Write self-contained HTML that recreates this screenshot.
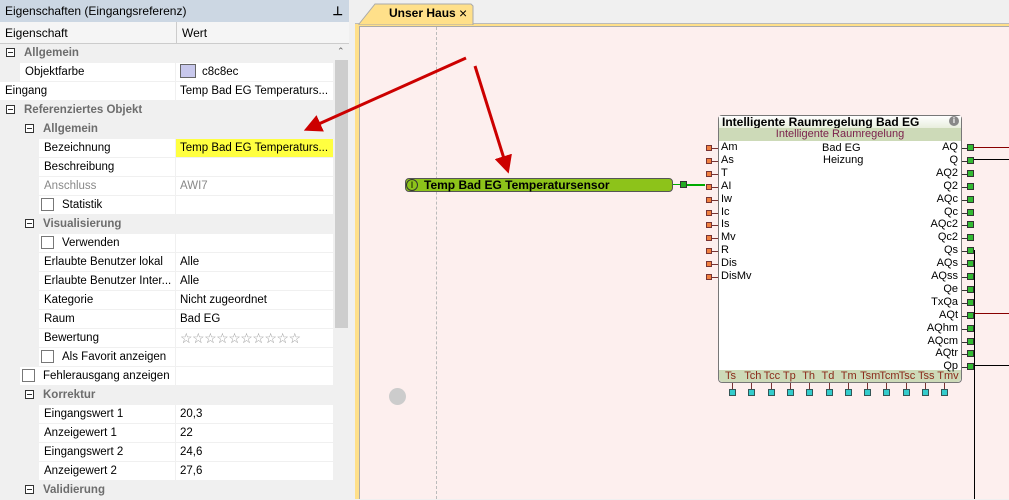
<!DOCTYPE html>
<html><head><meta charset="utf-8"><style>
*{margin:0;padding:0;box-sizing:border-box}
body{width:1009px;height:499px;overflow:hidden;background:#f0f0f0;font-family:"Liberation Sans",sans-serif;font-size:12px;color:#000;position:relative}
.abs{position:absolute}
.row{position:absolute;left:0;width:333px;height:19px;line-height:18px;white-space:nowrap;font-size:11.5px}
.row .n{position:absolute;top:0;height:18px;background:#fff;padding-left:5px;overflow:hidden}
.row .v{position:absolute;left:176px;width:157px;top:0;height:18px;background:#fff;padding-left:4px;overflow:hidden}
.grp{background:#f0f0f0;color:#6d6d6d;font-weight:bold}
.mn{position:absolute;top:4px;width:9px;height:9px;border:1px solid #333;background:#fff}
.mn:after{content:"";position:absolute;left:1px;top:3px;width:5px;height:1px;background:#333}
.cb{display:inline-block;width:13px;height:13px;border:1px solid #777;background:#fff;vertical-align:-3px;margin-right:8px}
.port{position:absolute;font-size:11px;line-height:13px}
</style></head><body>
<div class="abs" style="left:0;top:0;width:349px;height:22px;background:#ccd7e3;line-height:22px;padding-left:5px">Eigenschaften (Eingangsreferenz)<span style="position:absolute;right:6px;font-weight:bold">⊥</span></div>
<div class="abs" style="left:0;top:22px;width:349px;height:22px;background:#f5f5f5;border-bottom:1px solid #ccc;line-height:22px">
<span style="position:absolute;left:5px">Eigenschaft</span><span style="position:absolute;left:176px;top:0;height:21px;border-left:1px solid #ccc;padding-left:5px">Wert</span></div>
<div class="abs" style="left:333px;top:44px;width:16px;height:455px;background:#f0f0f0"></div>
<div class="abs" style="left:335px;top:60px;width:13px;height:268px;background:#cdcdcd"></div>
<div class="abs" style="left:337px;top:46px;font-size:9px;color:#666">⌃</div>
<div id="rows"></div>
<div class="abs" style="left:349px;top:0;width:9px;height:499px;background:#f0f0f0"></div>
<div class="abs" style="left:355px;top:23px;width:654px;height:476px;background:#ffe08a;border-top:1px solid #bbb"></div>
<svg class="abs" style="left:355px;top:3px" width="125" height="22"><path d="M4 21 L20 1 L116 1 L118 3 L118 22 L4 22Z" fill="#ffe08a" stroke="#aaa"/></svg>
<div class="abs" style="left:389px;top:6px;font-weight:bold">Unser Haus</div>
<div class="abs" style="left:459px;top:5px;font-size:14px">×</div>
<div class="abs" style="left:359px;top:26px;width:650px;height:473px;background:#aaa"></div>
<div class="abs" style="left:360px;top:27px;width:649px;height:472px;background:#fdefee"></div>
<div class="abs" style="left:436px;top:27px;height:472px;border-left:1px dashed #bbb"></div>
<div class="abs" style="left:389px;top:388px;width:17px;height:17px;border-radius:50%;background:#ccc"></div>
<div class="abs" style="left:405px;top:178px;width:268px;height:14px;background:#8dc31a;border:1px solid #555;border-radius:4px;font-weight:bold;font-size:12px;line-height:12px;padding-left:18px">Temp Bad EG Temperatursensor</div>
<div class="abs" style="left:406px;top:179px;width:12px;height:12px;border:1px solid #333;border-radius:50%;font-size:9px;line-height:10px;text-align:center">I</div>
<div class="abs" style="left:673px;top:184px;width:8px;height:1px;background:#0a0"></div>
<div class="abs" style="left:680px;top:181px;width:7px;height:7px;background:#2a2;border:1px solid #333"></div>
<div class="abs" style="left:687px;top:184px;width:18px;height:2px;background:#0a0"></div>
<div class="abs" style="left:718px;top:115px;width:244px;height:268px;background:#fff;border:1px solid #777;border-radius:4px"></div>
<div class="abs" style="left:719px;top:116px;width:242px;height:12px;font-weight:bold;font-size:12px;line-height:12px;padding-left:3px;background:linear-gradient(#fff,#e8eedd)">Intelligente Raumregelung Bad EG<span style="position:absolute;right:2px;top:0;width:10px;height:10px;border-radius:50%;background:#888;color:#fff;font-size:8px;text-align:center;line-height:10px">i</span></div>
<div class="abs" style="left:719px;top:128px;width:242px;height:13px;background:#cddab8;color:#7a1f4a;font-size:11px;text-align:center;line-height:13px">Intelligente Raumregelung</div>
<div class="abs" style="left:719px;top:370px;width:242px;height:12px;background:#cddab8;border-radius:0 0 4px 4px"></div>
<div class="port" style="left:822px;top:142px">Bad EG</div>
<div class="port" style="left:823px;top:154px">Heizung</div>
<div id="ports"></div>
<div class="abs" style="left:974px;top:147px;width:35px;height:1px;background:#800"></div>
<div class="abs" style="left:974px;top:159px;width:35px;height:1px;background:#000"></div>
<div class="abs" style="left:974px;top:313px;width:35px;height:1px;background:#800"></div>
<div class="abs" style="left:974px;top:365px;width:35px;height:1px;background:#000"></div>
<div class="abs" style="left:974px;top:250px;width:1px;height:249px;background:#000"></div>
<svg class="abs" style="left:0;top:0" width="1009" height="499">
<defs><marker id="a" markerWidth="6" markerHeight="6" refX="3" refY="3" orient="auto"><path d="M0 0L6 3L0 6Z" fill="#c00"/></marker></defs>
<g stroke="#c00" stroke-width="3" fill="none" marker-end="url(#a)"><line x1="466" y1="58" x2="312" y2="127"/><line x1="475" y1="66" x2="506" y2="165"/></g>
</svg>
<script>
var R=[
["g",0,"Allgemein"],["n",20,"Objektfarbe","<span style='display:inline-block;width:16px;height:14px;background:#c8c8ec;border:1px solid #666;vertical-align:-3px;margin-right:6px'></span>c8c8ec"],["n",0,"Eingang","Temp Bad EG Temperaturs..."],["g",0,"Referenziertes Objekt"],["g",20,"Allgemein"],["n",39,"Bezeichnung","Temp Bad EG Temperaturs...","#ffff40"],["n",39,"Beschreibung",""],["d",39,"Anschluss","AWI7"],["n",39,"<span class=cb></span>Statistik",""],["g",20,"Visualisierung"],["n",39,"<span class=cb></span>Verwenden",""],["n",39,"Erlaubte Benutzer lokal","Alle"],["n",39,"Erlaubte Benutzer Inter...","Alle"],["n",39,"Kategorie","Nicht zugeordnet"],["n",39,"Raum","Bad EG"],["n",39,"Bewertung","<span style='color:#999;font-size:14px;letter-spacing:-0.5px'>☆☆☆☆☆☆☆☆☆☆</span>"],["n",39,"<span class=cb></span>Als Favorit anzeigen",""],["n",20,"<span class=cb></span>Fehlerausgang anzeigen",""],["g",20,"Korrektur"],["n",39,"Eingangswert 1","20,3"],["n",39,"Anzeigewert 1","22"],["n",39,"Eingangswert 2","24,6"],["n",39,"Anzeigewert 2","27,6"],["g",20,"Validierung"]];
var h="";R.forEach(function(r,i){var t=44+i*19;
if(r[0]=="g"){h+="<div class='row grp' style='top:"+t+"px'><span class=mn style='left:"+(r[1]==0?6:25)+"px'></span><span style='position:absolute;left:"+(r[1]==0?24:43)+"px'>"+r[2]+"</span></div>";}
else{var c=r[0]=="d"?"color:#888;":"";var pl=r[2].indexOf("cb")>0?2:5;h+="<div class=row style='top:"+t+"px;"+c+"'><div class=n style='left:"+r[1]+"px;width:"+(175-r[1])+"px;padding-left:"+pl+"px'>"+r[2]+"</div><div class=v style='"+(r[4]?"background:"+r[4]:"")+"'>"+r[3]+"</div></div>";}});
document.getElementById("rows").innerHTML=h;
var L=["Am","As","T","AI","Iw","Ic","Is","Mv","R","Dis","DisMv"],O=["AQ","Q","AQ2","Q2","AQc","Qc","AQc2","Qc2","Qs","AQs","AQss","Qe","TxQa","AQt","AQhm","AQcm","AQtr","Qp"],B=["Ts","Tch","Tcc","Tp","Th","Td","Tm","Tsm","Tcm","Tsc","Tss","Tmv"];
var p="";L.forEach(function(s,i){var y=141+i*12.9;p+="<div class=port style='left:721px;top:"+y+"px'>"+s+"</div><div class=abs style='left:706px;top:"+(y+4)+"px;width:6px;height:6px;background:#f08040;border:1px solid #733'></div><div class=abs style='left:712px;top:"+(y+7)+"px;width:6px;height:1px;background:#733'></div>";});
O.forEach(function(s,i){var y=141+i*12.9;p+="<div class=port style='right:"+(1009-958)+"px;top:"+y+"px'>"+s+"</div><div class=abs style='left:962px;top:"+(y+7)+"px;width:6px;height:1px;background:#333'></div><div class=abs style='left:967px;top:"+(y+3)+"px;width:7px;height:7px;background:#3b3;border:1px solid #333'></div>";});
B.forEach(function(s,i){var x=732+i*19.3;p+="<div class=port style='left:"+(x-7)+"px;top:370px;color:#8a2a1a'>"+s+"</div><div class=abs style='left:"+x+"px;top:383px;width:1px;height:6px;background:#733'></div><div class=abs style='left:"+(x-3)+"px;top:389px;width:7px;height:7px;background:#3cc;border:1px solid #355'></div>";});
document.getElementById("ports").innerHTML=p;
</script>
</body></html>
